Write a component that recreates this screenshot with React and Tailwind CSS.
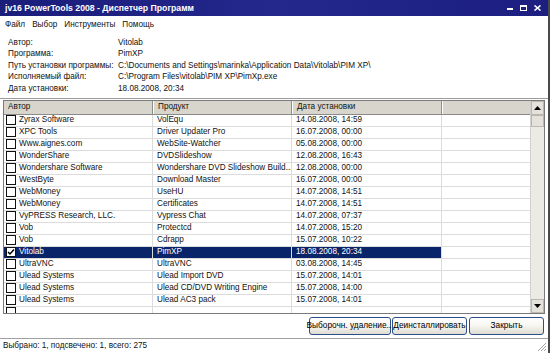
import React from "react";

const rows = [
  ["Zyrax Software", "VolEqu", "14.08.2008, 14:59"],
  ["XPC Tools", "Driver Updater Pro", "16.07.2008, 00:00"],
  ["Www.aignes.com", "WebSite-Watcher", "05.08.2008, 00:00"],
  ["WonderShare", "DVDSlideshow", "12.08.2008, 16:43"],
  ["Wondershare Software", "Wondershare DVD Slideshow Build...", "12.08.2008, 00:00"],
  ["WestByte", "Download Master", "16.07.2008, 00:00"],
  ["WebMoney", "UseHU", "14.07.2008, 14:51"],
  ["WebMoney", "Certificates", "14.07.2008, 14:51"],
  ["VyPRESS Research, LLC.", "Vypress Chat", "14.07.2008, 07:37"],
  ["Vob", "Protectcd", "14.07.2008, 15:20"],
  ["Vob", "Cdrapp", "15.07.2008, 10:22"],
  ["Vitolab", "PimXP", "18.08.2008, 20:34", true],
  ["UltraVNC", "UltraVNC", "03.08.2008, 14:45"],
  ["Ulead Systems", "Ulead Import DVD", "15.07.2008, 14:01"],
  ["Ulead Systems", "Ulead CD/DVD Writing Engine", "15.07.2008, 14:00"],
  ["Ulead Systems", "Ulead AC3 pack", "15.07.2008, 14:01"],
  ["", "", ""],
];

const info = [
  ["Автор:", "Vitolab"],
  ["Программа:", "PimXP"],
  ["Путь установки программы:", "C:\\Documents and Settings\\marinka\\Application Data\\Vitolab\\PIM XP\\"],
  ["Исполняемый файл:", "C:\\Program Files\\vitolab\\PIM XP\\PimXp.exe"],
  ["Дата установки:", "18.08.2008, 20:34"],
];

function Check({ checked }) {
  return (
    <div className="w-[10px] h-[10px] border-[1.5px] border-[#111] bg-white shrink-0 flex items-center justify-center">
      {checked && (
        <svg width="8" height="8" viewBox="0 0 8 8">
          <path d="M1 4 L3 6 L7 1.5" stroke="#000" strokeWidth="1.5" fill="none" />
        </svg>
      )}
    </div>
  );
}

function Btn({ children }) {
  return (
    <div className="h-[18px] rounded-[3px] border border-[#2c4f8a] bg-gradient-to-b from-white via-[#f6f5f0] to-[#dedcd2] flex items-center justify-center text-[8.3px] leading-none text-black whitespace-nowrap">
      {children}
    </div>
  );
}

export default function App() {
  return (
    <div className="w-[550px] h-[353px] overflow-hidden bg-white flex flex-col text-[#111] font-['Liberation_Sans',Arial,sans-serif] text-[8.2px] border-r-2 border-[#4a4a4a]">
      {/* Title bar */}
      <div className="h-[16px] shrink-0 bg-gradient-to-r from-[#1a1d7a] via-[#24278c] to-[#1c1e80] flex items-center pl-[5px] pr-[7px]">
        <span className="text-white font-bold text-[8.7px] leading-none">jv16 PowerTools 2008 - Диспетчер Программ</span>
        <div className="ml-auto flex items-center gap-[7px]">
          <svg width="6" height="6" viewBox="0 0 6 6"><rect x="0" y="3" width="6" height="2" fill="#fff" /></svg>
          <svg width="7" height="6" viewBox="0 0 7 6"><rect x="0.5" y="0.5" width="6" height="5" stroke="#fff" fill="none" /><rect x="0" y="0" width="7" height="2" fill="#fff" /></svg>
          <svg width="7" height="6" viewBox="0 0 7 6"><path d="M0.5 0.5 L6.5 5.5 M6.5 0.5 L0.5 5.5" stroke="#fff" strokeWidth="1.6" /></svg>
        </div>
      </div>
      {/* Menu */}
      <div className="h-[17px] shrink-0 flex items-center pl-[5px] pt-[2px] gap-[7px] leading-none">
        <span>Файл</span>
        <span>Выбор</span>
        <span>Инструменты</span>
        <span>Помощь</span>
      </div>
      {/* Info */}
      <div className="shrink-0 pt-[4px] pl-[8px] flex flex-col">
        {info.map(([l, v]) => (
          <div key={l} className="h-[11.5px] flex items-center leading-none">
            <span className="w-[110px] shrink-0 whitespace-nowrap">{l}</span>
            <span className="whitespace-nowrap">{v}</span>
          </div>
        ))}
      </div>
      <div className="h-[4px] shrink-0 border-b border-[#9a9a9a]" />
      {/* List */}
      <div className="mx-[3px] mt-[1px] h-[214px] shrink-0 border border-[#7a7a7a] flex">
        <div className="flex-1 flex flex-col overflow-hidden">
          <div className="h-[14px] shrink-0 flex bg-[#d8d6cc] border-b border-[#8a8a8a] leading-none">
            <div className="w-[149px] shrink-0 pl-[4px] flex items-center border-r border-[#8e8e8e]">Автор</div>
            <div className="w-[139px] shrink-0 pl-[4px] flex items-center border-r border-[#8e8e8e] border-l border-l-white">Продукт</div>
            <div className="w-[150px] shrink-0 pl-[4px] flex items-center border-r border-[#8e8e8e] border-l border-l-white">Дата установки</div>
            <div className="flex-1 border-l border-l-white" />
          </div>
          {rows.map(([a, p, d, sel], i) => (
            <div key={i} className="h-[12px] shrink-0 flex leading-none">
              <div className={`w-[149px] shrink-0 flex items-center pl-[2px] gap-[3px] border-r border-b border-[#dcdcdc] ${sel ? "bg-[#0a246a] text-white" : ""}`}>
                <Check checked={sel} />
                <span className="whitespace-nowrap">{a}</span>
              </div>
              <div className={`w-[139px] shrink-0 flex items-center pl-[4px] border-r border-b border-[#dcdcdc] whitespace-nowrap overflow-hidden ${sel ? "bg-[#0a246a] text-white" : ""}`}>{p}</div>
              <div className={`w-[150px] shrink-0 flex items-center pl-[4px] border-r border-b border-[#dcdcdc] ${sel ? "bg-[#0a246a] text-white" : ""}`}>{d}</div>
              <div className="flex-1 border-b border-[#dcdcdc]" />
            </div>
          ))}
        </div>
        {/* Scrollbar */}
        <div className="w-[14px] shrink-0 bg-[#eceae4] flex flex-col border-l border-[#d0d0d0]">
          <div className="h-[14px] bg-[#e4e2da] border border-[#b8b8b0] flex items-center justify-center">
            <svg width="7" height="4" viewBox="0 0 7 4"><path d="M0 4 L3.5 0 L7 4 Z" fill="#000" /></svg>
          </div>
          <div className="h-[12px] bg-[#e4e2da] border border-[#b8b8b0]" />
          <div className="flex-1" />
          <div className="h-[14px] bg-[#e4e2da] border border-[#b8b8b0] flex items-center justify-center">
            <svg width="7" height="4" viewBox="0 0 7 4"><path d="M0 0 L3.5 4 L7 0 Z" fill="#000" /></svg>
          </div>
        </div>
      </div>
      {/* Buttons */}
      <div className="h-[24px] shrink-0 flex items-center justify-end pr-[4px] gap-[1px]">
        <div className="w-[82px]"><Btn>Выборочн. удаление...</Btn></div>
        <div className="w-[75px]"><Btn>Деинсталлировать</Btn></div>
        <div className="w-[75px] ml-[1px]"><Btn>Закрыть</Btn></div>
      </div>
      {/* Status bar */}
      <div className="flex-1 border-t border-[#a0a0a0] flex items-center pl-[3px] relative">
        <span className="leading-none">Выбрано: 1, подсвечено: 1, всего: 275</span>
        <svg className="absolute right-[1px] bottom-[1px]" width="10" height="10" viewBox="0 0 10 10">
          <path d="M9 1 L1 9 M9 4 L4 9 M9 7 L7 9" stroke="#a0a0a0" strokeWidth="1" />
        </svg>
      </div>
    </div>
  );
}
